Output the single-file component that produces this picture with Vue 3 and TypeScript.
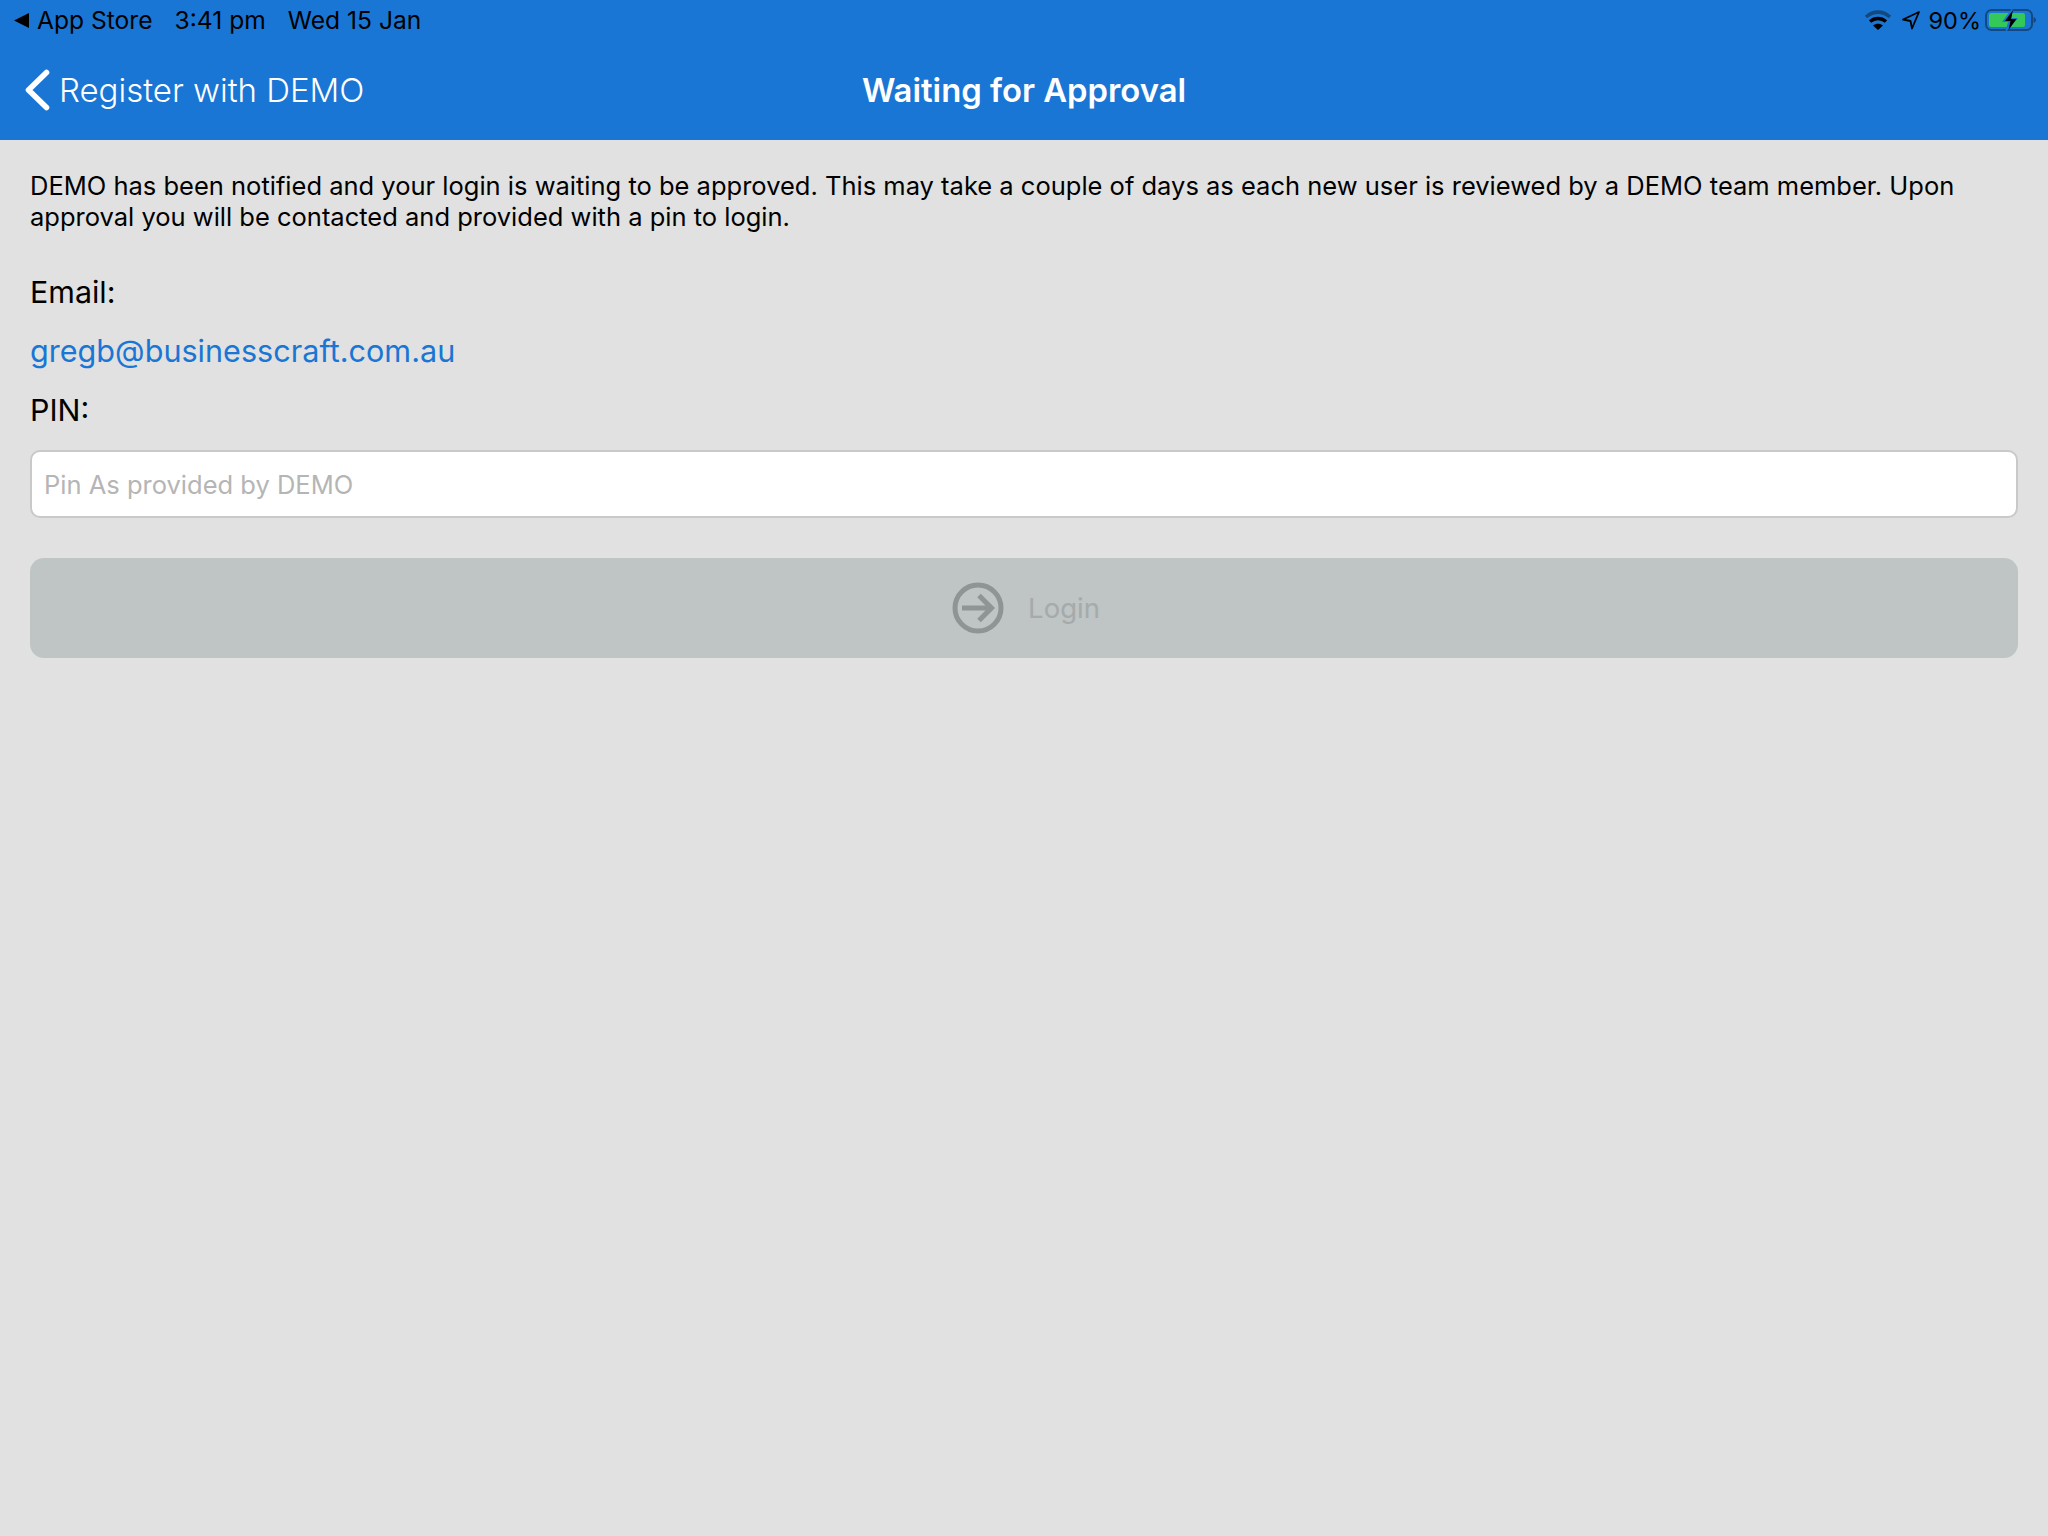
<script setup lang="ts">
const message: string =
  'DEMO has been notified and your login is waiting to be approved. This may take a couple of days as each new user is reviewed by a DEMO team member. Upon approval you will be contacted and provided with a pin to login.'
</script>

<template>
  <div class="page">
    <header class="header">
      <div class="status">
        <div class="status-left">
          <svg class="back-tri" width="15" height="15" viewBox="0 0 15 15"><path d="M0 7.500 15 0v15z" fill="#000" /></svg>
          <span class="app-store">App Store</span>
          <span class="time">3:41 pm</span>
          <span class="date">Wed 15 Jan</span>
        </div>
        <div class="status-right">
          <svg width="28" height="22" viewBox="0 0 28 22">
            <path d="M2 8C9.500 1.500 18.500 1.500 26 8" fill="none" stroke="#13497f" stroke-width="3.600" />
            <path d="M6 12.500C10.800 8.500 17.200 8.500 22 12.500" fill="none" stroke="#000" stroke-width="3.400" />
            <path d="M9 16.500C12 14 16 14 19 16.500L14 21z" fill="#000" />
          </svg>
          <svg class="loc" width="20" height="20" viewBox="0 0 20 20"><path d="M18 2 2 9.500l7.500 1.500 1.500 7.500z" fill="none" stroke="#000" stroke-width="1.800" stroke-linejoin="round" /></svg>
          <span class="pct">90%</span>
          <svg class="battery" width="52" height="26" viewBox="0 0 52 26">
            <rect x="1" y="3" width="46" height="20" rx="5.500" fill="none" stroke="#13497f" stroke-width="2" />
            <rect x="4" y="6" width="36" height="14" rx="2" fill="#34c759" />
            <path d="M48.500 10v6c1.600-.5 2.500-1.600 2.500-3s-.9-2.500-2.500-3z" fill="#13497f" />
            <path d="M28 0 17 15h6l-3 11 13-15h-6.500z" fill="#1a76d4" />
            <path d="M28 3 20 14h5.500l-2 9 8-11h-5.500z" fill="#000" />
          </svg>
        </div>
      </div>
      <nav class="nav">
        <a class="back">
          <svg width="26" height="42" viewBox="0 0 26 42"><path d="M22.500 3.500 4.500 21l18 17.500" fill="none" stroke="#fff" stroke-width="5.600" stroke-linecap="round" stroke-linejoin="round" /></svg>
          <span>Register with DEMO</span>
        </a>
        <h1 class="title">Waiting for Approval</h1>
      </nav>
    </header>

    <main class="content">
      <p class="message">{{ message }}</p>
      <div class="label email-label">Email:</div>
      <div class="email">gregb@businesscraft.com.au</div>
      <div class="label pin-label">PIN:</div>
      <input class="pin" type="text" placeholder="Pin As provided by DEMO" />
      <div class="login">
        <svg width="52" height="52" viewBox="0 0 52 52">
          <circle cx="26" cy="26" r="23" fill="none" stroke="#8f9494" stroke-width="5" />
          <path d="M10 26h30M27 13.500 39.500 26 27 38.500" fill="none" stroke="#8f9494" stroke-width="5" />
        </svg>
        <span>Login</span>
      </div>
    </main>
  </div>
</template>

<style>
html, body { margin: 0; background: #e1e1e1; }
</style>

<style scoped>
.page {
  width: 2048px;
  height: 1536px;
  background: #e1e1e1;
  font-family: Inter, "Liberation Sans", sans-serif;
  overflow: hidden;
}
.header { height: 140px; background: #1a76d4; }
.status {
  height: 40px;
  display: flex;
  justify-content: space-between;
  align-items: center;
  padding: 0 11px 0 14px;
  color: #000;
  font-size: 24.600px;
}
.status-left { display: flex; align-items: center; }
.back-tri { margin-right: 8px; }
.time { margin-left: 22px; }
.date { margin-left: 22px; }
.status-right { display: flex; align-items: center; }
.loc { margin-left: 9px; }
.pct { margin-left: 8px; font-size: 23.500px; }
.battery { margin-left: 4px; }
.nav {
  height: 100px;
  position: relative;
  display: flex;
  align-items: center;
  justify-content: center;
  color: #fff;
  font-size: 33px;
}
.back {
  position: absolute;
  left: 24px;
  top: 29px;
  display: flex;
  align-items: center;
  gap: 9px;
  font-weight: 300;
}
.title { margin: 0; font-size: 32.800px; font-weight: 600; }
.content { padding: 30px 30px 0; display: flex; flex-direction: column; }
.message {
  margin: 0;
  font-size: 25.500px;
  line-height: 31px;
  color: #000;
}
.label { font-size: 30.400px; line-height: 38px; color: #000; }
.email-label { margin-top: 41px; }
.email { margin-top: 21px; font-size: 30.600px; line-height: 38px; color: #1a76d4; }
.pin-label { margin-top: 21px; }
.pin {
  box-sizing: border-box;
  width: 100%;
  height: 68px;
  margin-top: 21px;
  padding: 0 12px;
  background: #fff;
  border: 2px solid #c9c9c9;
  border-radius: 10px;
  font: 400 25.500px Inter, "Liberation Sans", sans-serif;
  outline: none;
}
.pin::placeholder { color: #b5b5b5; opacity: 1; }
.login {
  height: 100px;
  margin-top: 40px;
  padding-left: 4px;
  background: #bfc4c4;
  border-radius: 14px;
  display: flex;
  align-items: center;
  justify-content: center;
  gap: 24px;
  color: #a5aaaa;
  font-size: 27.500px;
}
</style>
